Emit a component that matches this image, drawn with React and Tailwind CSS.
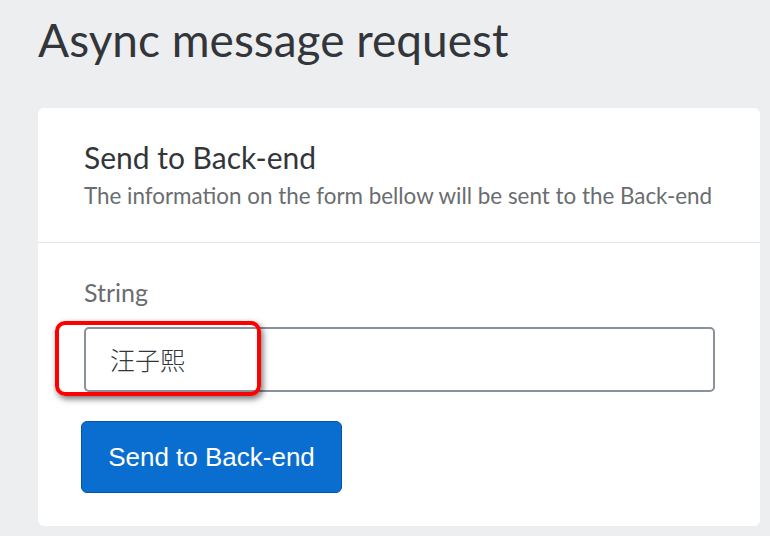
import React from "react";

const App = () => {
  return (
    <div
      className="w-[770px] h-[536px] overflow-hidden bg-[#edeef0] pl-[38px] pr-[10px]"
      style={{ fontFamily: "Lato, 'Noto Sans', sans-serif" }}
    >
      <h1 className="pt-[12px] text-[46px] leading-[56px] text-[#32363a]">Async message request</h1>

      <div className="mt-[40px] bg-white rounded-[6px] h-[418px]">
        <div className="px-[46px] pt-[31px] pb-[31px] border-b border-[#e5e5e5]">
          <h2 className="text-[30px] leading-[36px] text-[#32363a]">Send to Back-end</h2>
          <p className="mt-[6px] text-[22.4px] leading-[30px] text-[#6a6d70]">
            The information on the form bellow will be sent to the Back-end
          </p>
        </div>

        <div className="px-[46px] pt-[34px]">
          <label className="block text-[25px] leading-[30px] text-[#6a6d70]">String</label>

          <div className="relative mt-[20px] w-[631px]">
            <div
              className="h-[65px] border-2 border-[#89919a] rounded-[5px] flex items-center pl-[24px] text-[25px] font-light text-[#32363a]"
              style={{ fontFamily: "'Noto Sans CJK SC', serif" }}
            >
              汪子熙
            </div>
            <div className="absolute left-[-29px] top-[-6px] w-[206px] h-[75px] border-[4px] border-[#ff0000] rounded-[10px] shadow-[2px_3px_6px_rgba(0,0,0,0.55)]" />
          </div>

          <button
            className="mt-[29px] ml-[-3px] w-[261px] h-[72px] bg-[#0a6ed1] border border-[#0854a0] rounded-[6px] text-white text-[26px]"
            style={{ fontFamily: "'Liberation Sans', Arial, sans-serif" }}
          >
            Send to Back-end
          </button>
        </div>
      </div>
    </div>
  );
};

export default App;
